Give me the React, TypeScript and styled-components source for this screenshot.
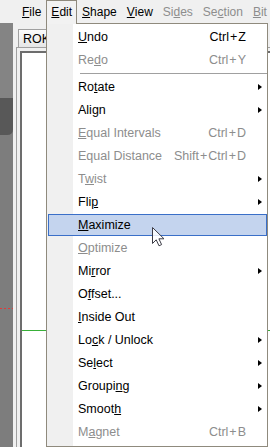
import React from "react";
import styled, { createGlobalStyle } from "styled-components";

type Item =
  | { sep: true }
  | {
      sep?: false;
      label: string;
      key?: number;
      shortcut?: string;
      sub?: boolean;
      disabled?: boolean;
      active?: boolean;
    };

const menuBar = [
  { label: "File", key: 0 },
  { label: "Edit", key: 0, open: true },
  { label: "Shape", key: 0 },
  { label: "View", key: 0 },
  { label: "Sides", key: 2, disabled: true },
  { label: "Section", key: 2, disabled: true },
  { label: "Bit", key: 0, disabled: true },
];

const items: Item[] = [
  { label: "Undo", key: 0, shortcut: "Ctrl+Z" },
  { label: "Redo", key: 2, shortcut: "Ctrl+Y", disabled: true },
  { sep: true },
  { label: "Rotate", key: 2, sub: true },
  { label: "Align", key: 3, sub: true },
  { label: "Equal Intervals", key: 0, shortcut: "Ctrl+D", disabled: true },
  { label: "Equal Distance", shortcut: "Shift+Ctrl+D", disabled: true },
  { label: "Twist", key: 1, sub: true, disabled: true },
  { label: "Flip", key: 3, sub: true },
  { label: "Maximize", key: 0, active: true },
  { label: "Optimize", key: 0, disabled: true },
  { label: "Mirror", key: 2, sub: true },
  { label: "Offset...", key: 1 },
  { label: "Inside Out", key: 0 },
  { label: "Lock / Unlock", key: 2, sub: true },
  { label: "Select", key: 2, sub: true },
  { label: "Grouping", key: 6, sub: true },
  { label: "Smooth", key: 5, sub: true },
  { label: "Magnet", key: 1, shortcut: "Ctrl+B", disabled: true },
];

const Mnemonic = ({ text, at }: { text: string; at?: number }) => {
  if (at === undefined || at < 0) return <>{text}</>;
  return (
    <>
      {text.slice(0, at)}
      <Key>{text[at]}</Key>
      {text.slice(at + 1)}
    </>
  );
};

const Shortcut = ({ text }: { text: string }) => {
  const parts = text.split("+");
  return (
    <>
      {parts.map((p, i) => (
        <React.Fragment key={i}>
          {i > 0 && <Plus>+</Plus>}
          {p}
        </React.Fragment>
      ))}
    </>
  );
};

const Cursor = () => (
  <CursorSvg width="14" height="21" viewBox="0 0 14 21">
    <path
      d="M1.5 1.5 L1.5 17.5 L5.2 13.8 L8 19.8 L10.6 18.6 L7.9 12.8 L13 12.8 Z"
      fill="rgba(255,255,255,0.85)"
      stroke="#3c3c46"
      strokeWidth="1"
      strokeLinejoin="miter"
    />
  </CursorSvg>
);

const App = () => {
  return (
    <>
      <GlobalStyle />
      <Window>
        <MenuBar>
          {menuBar.map((m) => (
            <BarItem key={m.label} $open={m.open} $disabled={m.disabled}>
              <Mnemonic text={m.label} at={m.key} />
            </BarItem>
          ))}
        </MenuBar>

        <Body>
          <Canvas>
            <svg width="13" height="424" viewBox="0 0 13 424">
              <rect x="0" y="0" width="13" height="424" fill="#7d7d7d" />
              <rect x="0" y="0" width="13" height="75" fill="#848484" />
              <path d="M0 75 H13 V106 Q13 112 7 112 H0 Z" fill="#585858" />
              <line
                x1="0"
                y1="285.5"
                x2="13"
                y2="285.5"
                stroke="#e23a3a"
                strokeWidth="1"
                strokeDasharray="2 2"
              />
            </svg>
          </Canvas>
          <SidePanel>
            <TabRow>
              <Tab>ROKI Shape</Tab>
            </TabRow>
            <Frame>
              <Sheet>
                <GreenLine />
              </Sheet>
            </Frame>
          </SidePanel>
        </Body>

        <Dropdown>
          {items.map((it, i) =>
            it.sep ? (
              <Separator key={i} />
            ) : (
              <Row key={i} $active={it.active} $disabled={it.disabled}>
                <Label>
                  <Mnemonic text={it.label} at={it.key} />
                </Label>
                <Accel>{it.shortcut && <Shortcut text={it.shortcut} />}</Accel>
                <SubCell>{it.sub && <Arrow />}</SubCell>
              </Row>
            )
          )}
        </Dropdown>

        <Cursor />
      </Window>
    </>
  );
};

export default App;

const GlobalStyle = createGlobalStyle`
  html, body {
    margin: 0;
    padding: 0;
    background: #f0f0f0;
  }
  body {
    font-family: "Liberation Sans", Arial, sans-serif;
    font-size: 12.5px;
    color: #000;
    overflow: hidden;
  }
`;

const Window = styled.div`
  position: relative;
  width: 270px;
  height: 447px;
  overflow: hidden;
  display: flex;
  flex-direction: column;
  background: #f0f0f0;
`;

const MenuBar = styled.div`
  height: 23px;
  display: flex;
  align-items: stretch;
  padding-left: 17px;
  background: #f0f0f0;
  flex-shrink: 0;
  font-size: 12px;
`;

const BarItem = styled.div<{ $open?: boolean; $disabled?: boolean }>`
  display: flex;
  align-items: center;
  padding: 0 5px;
  white-space: nowrap;
  color: ${(p) => (p.$disabled ? "#8d8d8d" : "#000")};
  ${(p) =>
    p.$open &&
    `
    position: relative;
    z-index: 3;
    height: 24px;
    box-sizing: border-box;
    padding: 0 4px 1px;
    background: #f2f2f2;
    border: 1px solid #8f8a7d;
    border-bottom: none;
  `}
`;

const Key = styled.span`
  text-decoration: underline;
  text-underline-offset: 1px;
`;

const Body = styled.div`
  flex: 1;
  display: flex;
  min-height: 0;
`;

const Canvas = styled.div`
  width: 13px;
  flex-shrink: 0;
  background: #7d7d7d;
  svg {
    display: block;
  }
`;

const SidePanel = styled.div`
  flex: 1;
  display: flex;
  flex-direction: column;
  padding: 6px 0 0 3px;
  background: #f0f0f0;
`;

const TabRow = styled.div`
  height: 18px;
  display: flex;
  padding-left: 2px;
`;

const Tab = styled.div`
  display: flex;
  align-items: center;
  padding: 0 6px 0 4px;
  border: 1px solid #a0a0a0;
  border-bottom: none;
  background: linear-gradient(#fbfbfb, #e6e6e6);
  white-space: nowrap;
`;

const Frame = styled.div`
  flex: 1;
  display: flex;
  border: 1px solid #a0a0a0;
  border-right: none;
  border-bottom: none;
  padding: 3px 0 0 3px;
`;

const Sheet = styled.div`
  flex: 1;
  background: #fff;
  border-top: 2px solid #6d6d6d;
  border-left: 2px solid #6d6d6d;
`;

const GreenLine = styled.div`
  margin-top: 277px;
  height: 1px;
  background: #38b038;
`;

const Dropdown = styled.div`
  position: absolute;
  z-index: 2;
  top: 23px;
  left: 46px;
  width: 222px;
  height: 424px;
  box-sizing: border-box;
  padding: 1px 0;
  border: 1px solid #8f8a7d;
  background: linear-gradient(to right, #f0f0f0 0 26px, #fff 26px);
`;

const Row = styled.div<{ $active?: boolean; $disabled?: boolean }>`
  display: grid;
  grid-template-columns: 1fr auto 21px;
  align-items: center;
  box-sizing: border-box;
  height: 23px;
  padding-left: 31px;
  white-space: nowrap;
  color: ${(p) => (p.$disabled ? "#8d8d8d" : "#000")};
  ${(p) =>
    p.$active &&
    `
    height: 22px;
    margin: 1px 0 0 1px;
    padding-left: 29px;
    background: #c4d4ee;
    border: 1px solid #3a6fc8;
    grid-template-columns: 1fr auto 19px;
  `}
`;

const Label = styled.span``;

const Accel = styled.span`
  text-align: right;
`;

const Plus = styled.span`
  padding: 0 1px;
`;

const SubCell = styled.span`
  display: flex;
  align-items: center;
  padding-left: 12px;
`;

const Arrow = styled.span`
  width: 0;
  height: 0;
  border-left: 4px solid #000;
  border-top: 3.5px solid transparent;
  border-bottom: 3.5px solid transparent;
`;

const Separator = styled.div`
  height: 4px;
  display: flex;
  align-items: center;
  padding-left: 33px;
  &::after {
    content: "";
    flex: 1;
    height: 1px;
    background: #a0a0a0;
  }
`;

const CursorSvg = styled.svg`
  position: absolute;
  z-index: 4;
  left: 151px;
  top: 226px;
`;
